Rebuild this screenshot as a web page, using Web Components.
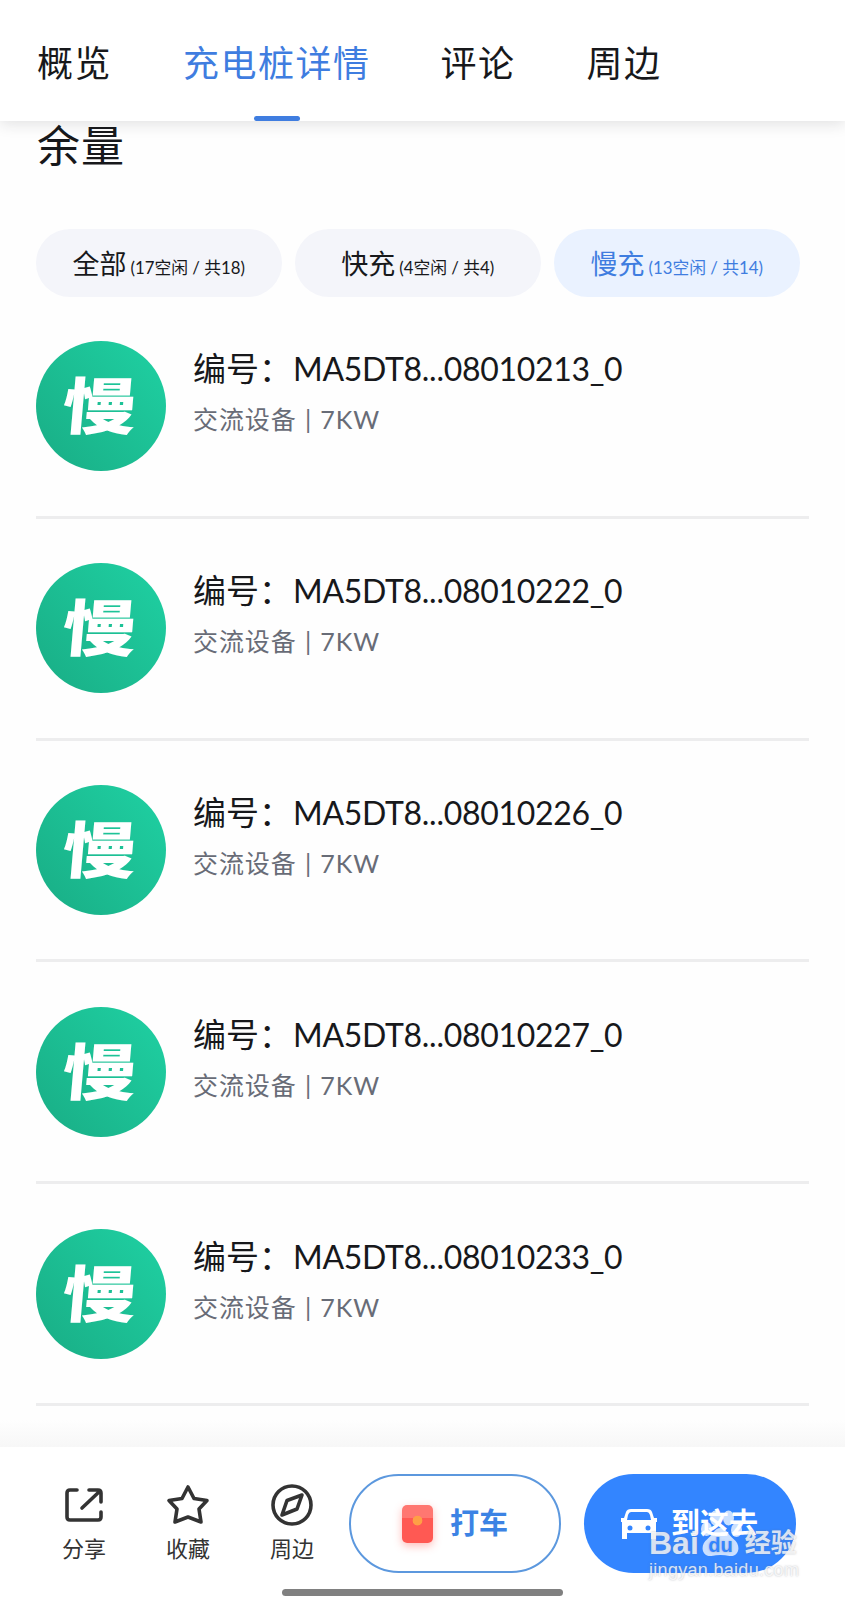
<!DOCTYPE html>
<html lang="zh-CN">
<head>
<meta charset="utf-8">
<title>充电桩详情</title>
<style>
  :root {
    --ink: #17181b;
    --blue: #3f7de0;
    --line: #ededee;
  }

  body {
    margin: 0;
    width: 845px;
    height: 1600px;
    overflow: hidden;
    background: #fefefe;
    color: var(--ink);
    font-family: Lato, "Noto Sans CJK SC", sans-serif;
  }
</style>
</head>
<body>
<station-page>
  <tab-bar slot="header">
    <tab-item style="--gap: 71px">概览</tab-item>
    <tab-item active style="--gap: 70px">充电桩详情</tab-item>
    <tab-item style="--gap: 71px">评论</tab-item>
    <tab-item>周边</tab-item>
  </tab-bar>

  <filter-chip slot="filters" label="全部">(17空闲 / 共18)</filter-chip>
  <filter-chip slot="filters" label="快充">(4空闲 / 共4)</filter-chip>
  <filter-chip slot="filters" label="慢充" active>(13空闲 / 共14)</filter-chip>

  <charger-row code="MA5DT8...08010213_0">交流设备 | 7KW</charger-row>
  <charger-row code="MA5DT8...08010222_0">交流设备 | 7KW</charger-row>
  <charger-row code="MA5DT8...08010226_0">交流设备 | 7KW</charger-row>
  <charger-row code="MA5DT8...08010227_0">交流设备 | 7KW</charger-row>
  <charger-row code="MA5DT8...08010233_0">交流设备 | 7KW</charger-row>

  <action-bar slot="footer"></action-bar>
</station-page>

<script>
class StationPage extends HTMLElement {
  constructor() {
    super();
    this.attachShadow({ mode: "open" });

    this.shadowRoot.innerHTML = `
      <style>
        :host {
          display: flex;
          flex-direction: column;
          height: 1600px;
        }

        h1 {
          margin: 0;
          padding: 0 0 0 37px;
          height: 108px;
          line-height: 49px;
          font-size: 43px;
          font-weight: 400;
          letter-spacing: 1px;
        }

        nav {
          display: flex;
          gap: 13.5px;
          padding-left: 36px;
          height: 68px;
        }

        main {
          flex: 1;
          padding: 0 36px;
        }
      </style>

      <slot name="header"></slot>
      <h1>余量</h1>
      <nav><slot name="filters"></slot></nav>
      <main><slot></slot></main>
      <slot name="footer"></slot>
    `;
  }
}

class TabBar extends HTMLElement {
  constructor() {
    super();
    this.attachShadow({ mode: "open" });

    this.shadowRoot.innerHTML = `
      <style>
        :host {
          display: flex;
          box-sizing: border-box;
          height: 121px;
          padding-left: 37px;
          background: #fff;
          box-shadow: 0 3px 14px rgba(30, 32, 40, 0.13);
        }
      </style>

      <slot></slot>
    `;
  }
}

class TabItem extends HTMLElement {
  constructor() {
    super();
    this.attachShadow({ mode: "open" });

    this.shadowRoot.innerHTML = `
      <style>
        :host {
          display: flex;
          flex-direction: column;
          align-items: center;
          justify-content: space-between;
          margin-right: var(--gap, 0);
          font-size: 36px;
          letter-spacing: 1.5px;
          line-height: 40px;
          white-space: nowrap;
        }

        :host([active]) {
          color: var(--blue);
        }

        span {
          padding-top: 43px;
        }

        i {
          width: 46px;
          height: 5px;
          border-radius: 3px;
        }

        :host([active]) i {
          background: var(--blue);
        }
      </style>

      <span><slot></slot></span>
      <i></i>
    `;
  }
}

class FilterChip extends HTMLElement {
  constructor() {
    super();
    this.attachShadow({ mode: "open" });

    this.shadowRoot.innerHTML = `
      <style>
        :host {
          display: flex;
          align-items: baseline;
          justify-content: center;
          width: 245.5px;
          height: 68px;
          border-radius: 34px;
          background: #f4f5fa;
          line-height: 70px;
          white-space: nowrap;
        }

        :host([active]) {
          background: #eaf2ff;
          color: var(--blue);
        }

        b {
          font-size: 27px;
          font-weight: 400;
          margin-right: 4px;
        }

        small {
          font-size: 16.8px;
        }
      </style>

      <b>${this.getAttribute("label")}</b><small><slot></slot></small>
    `;
  }
}

class ChargerRow extends HTMLElement {
  constructor() {
    super();
    this.attachShadow({ mode: "open" });

    this.shadowRoot.innerHTML = `
      <style>
        :host {
          display: flex;
          box-sizing: border-box;
          height: 221.8px;
          padding-top: 44.4px;
          border-bottom: 3px solid var(--line);
        }

        figure {
          display: grid;
          place-items: center;
          flex: none;
          margin: 0 27px 0 0;
          width: 130px;
          height: 130px;
          border-radius: 50%;
          background: linear-gradient(50deg, #19ad85, #1fd1a3);
          color: #fff;
          font-size: 66px;
          font-weight: 900;
          line-height: 1;
        }

        figure span {
          transform: translate(-1px, 0) skewX(-5deg) scale(1.12, 0.93);
        }

        strong {
          display: block;
          margin-top: 5px;
          font-size: 33px;
          font-weight: 400;
          line-height: 44px;
          white-space: nowrap;
        }

        strong span {
          margin-left: 1px;
          font-size: 32px;
          letter-spacing: -0.3px;
        }

        p {
          margin: 12px 0 0;
          font-size: 25px;
          line-height: 32px;
          letter-spacing: 0.9px;
          word-spacing: 1px;
          color: #686c77;
        }
      </style>

      <figure><span>慢</span></figure>
      <div>
        <strong>编号：<span>${this.getAttribute("code")}</span></strong>
        <p><slot></slot></p>
      </div>
    `;
  }
}

class ActionBar extends HTMLElement {
  constructor() {
    super();
    this.attachShadow({ mode: "open" });

    this.shadowRoot.innerHTML = `
      <style>
        :host {
          display: block;
          position: relative;
          height: 180px;
          background: linear-gradient(#fefefe, #f7f7f7 27px, #fff 27px);
        }

        .bar {
          display: flex;
          padding: 54px 0 0 32px;
          height: 99px;
        }

        .tool {
          display: flex;
          flex-direction: column;
          align-items: center;
          width: 104px;
          padding-top: 8px;
          font-size: 22px;
          line-height: 30px;
          color: #333;
        }

        .tool svg {
          width: 46px;
          height: 46px;
          margin-bottom: 6px;
          fill: none;
          stroke: #333;
          stroke-width: 3.6;
          stroke-linecap: round;
          stroke-linejoin: round;
        }

        .button {
          display: flex;
          align-items: center;
          box-sizing: border-box;
          width: 212px;
          height: 99px;
          padding-bottom: 5px;
          border-radius: 50px;
          font-size: 29px;
          font-weight: 700;
          white-space: nowrap;
        }

        .taxi {
          margin-left: 5px;
          padding-left: 51px;
          border: 2px solid #5c98de;
          background: #fff;
          color: #3c83e4;
        }

        .taxi i {
          width: 31px;
          height: 38px;
          margin: 5px 17px 0 0;
          border-radius: 5px;
          background:
            radial-gradient(circle at 50% 41%, #ff9f45 4.5px, transparent 5.2px),
            linear-gradient(#ff7771 13px, #ff5953 13px);
          box-shadow: 0 3px 9px rgba(255, 90, 83, 0.4);
        }

        .go {
          margin-left: 23px;
          padding-left: 36px;
          background: #3385ff;
          color: #fff;
        }

        .go svg {
          width: 38px;
          height: 32px;
          margin: 5px 13px 0 0;
        }

        .home {
          position: absolute;
          left: 282px;
          top: 169px;
          width: 281px;
          height: 7px;
          border-radius: 4px;
          background: #808080;
        }
      </style>

      <div class="bar">
        <div class="tool">
          <svg viewBox="0 0 46 46"><path d="M16 8H9Q6 8 6 11V35Q6 38 9 38H37Q40 38 40 35V30M28 8H37Q40 8 40 11V20M39 9L21 26"/></svg>
          分享
        </div>
        <div class="tool">
          <svg viewBox="0 0 46 46"><path d="M23 5L29 16.500L42 18.500L34 27L36 40L23 35L10 40L12 27L4 18.500L17 16.500Z"/></svg>
          收藏
        </div>
        <div class="tool">
          <svg viewBox="0 0 46 46"><circle cx="23" cy="23" r="19"/><path d="M33 13L28 27L13 33L18 18.500Z"/></svg>
          周边
        </div>
        <div class="button taxi"><i></i>打车</div>
        <div class="button go">
          <svg viewBox="0 0 38 32"><path fill="#fff" fill-rule="evenodd" d="M11 1H27Q31 1 32 4L34 10H37V14H36V31H31V25H7V31H2V14H1V10H4L6 4Q7 1 11 1ZM11 4Q9 4 8 7L7 12H31L30 7Q29 4 27 4ZM10 17.500A2.500 2.500 0 1 0 10 22.500A2.500 2.500 0 1 0 10 17.500ZM28 17.500A2.500 2.500 0 1 0 28 22.500A2.500 2.500 0 1 0 28 17.500Z"/></svg>
          到这去
        </div>
      </div>
      <div class="home"></div>
      <site-mark></site-mark>
    `;
  }
}

class SiteMark extends HTMLElement {
  constructor() {
    super();
    this.attachShadow({ mode: "open" });

    this.shadowRoot.innerHTML = `
      <style>
        :host {
          position: absolute;
          left: 649px;
          top: 90px;
          width: 154px;
          color: rgba(255, 255, 255, 0.8);
          font-family: "Liberation Sans", "Noto Sans CJK SC", sans-serif;
          text-shadow: 0 0 2px rgba(110, 115, 130, 0.5);
        }

        .name {
          display: flex;
          align-items: flex-end;
          height: 49px;
          font-size: 32px;
          font-weight: 700;
          line-height: 32px;
        }

        svg {
          flex: none;
          width: 43px;
          height: 50px;
          margin-left: 1px;
          fill: rgba(255, 255, 255, 0.75);
        }

        .cn {
          margin-left: 2px;
          font-size: 26px;
        }

        .site {
          font-size: 18px;
          line-height: 22px;
          letter-spacing: 0.3px;
        }
      </style>

      <div class="name">
        <span>Bai</span>
        <svg viewBox="0 0 42 50">
          <ellipse cx="6" cy="20" rx="5.500" ry="7"/>
          <ellipse cx="15" cy="9" rx="5.500" ry="7.500"/>
          <ellipse cx="28" cy="9" rx="5.500" ry="7.500"/>
          <ellipse cx="36" cy="21" rx="5.500" ry="7"/>
          <path d="M20 19C26 19 27 25 33 30C41 36 39 48 29 47Q20 45 11 47C1 48 -1 36 7 30C13 25 14 19 20 19Z"/>
          <text x="20" y="43" text-anchor="middle" font-size="20" fill="#3385ff">du</text>
        </svg>
        <span class="cn">经验</span>
      </div>
      <div class="site">jingyan.baidu.com</div>
    `;
  }
}

customElements.define("site-mark", SiteMark);
customElements.define("tab-item", TabItem);
customElements.define("tab-bar", TabBar);
customElements.define("filter-chip", FilterChip);
customElements.define("charger-row", ChargerRow);
customElements.define("action-bar", ActionBar);
customElements.define("station-page", StationPage);
</script>
</body>
</html>
